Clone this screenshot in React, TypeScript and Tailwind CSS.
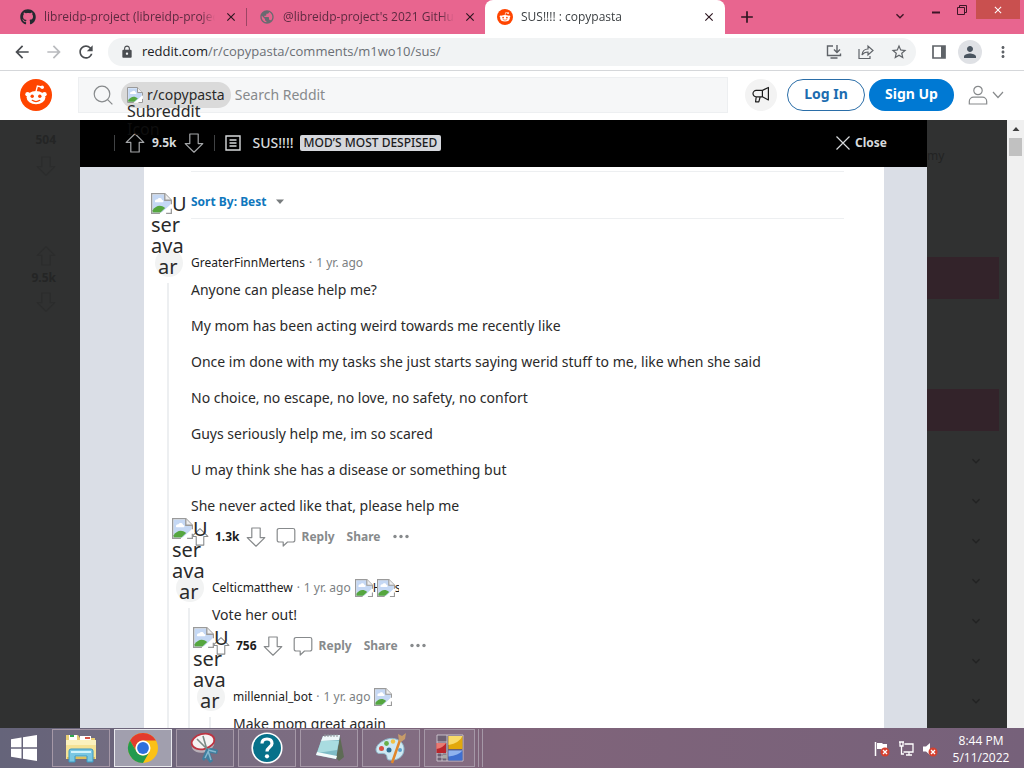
import React from 'react';
import { FaGithub } from 'react-icons/fa';
import {
  MdAdd, MdArrowBack, MdArrowForward, MdClose, MdExpandMore, MdLock, MdMoreVert,
  MdPerson, MdPublic, MdRefresh, MdStarBorder,
} from 'react-icons/md';

function Snoo({ className }: { className: string }) {
  return (
    <svg viewBox="0 0 32 32" className={className} aria-hidden="true">
      <circle cx="16" cy="16" r="16" fill="#ff4500" />
      <path d="M16 12.5 17.4 7l4.2 1" fill="none" stroke="#fff" strokeWidth="1.3" />
      <circle cx="22.2" cy="8.2" r="1.8" fill="#fff" />
      <circle cx="7.6" cy="15.2" r="2.3" fill="#fff" />
      <circle cx="24.4" cy="15.2" r="2.3" fill="#fff" />
      <ellipse cx="16" cy="18.6" rx="9.4" ry="6.6" fill="#fff" />
      <circle cx="12.2" cy="17.2" r="1.7" fill="#ff4500" />
      <circle cx="19.8" cy="17.2" r="1.7" fill="#ff4500" />
      <path d="M12.2 21.3q3.8 2.5 7.6 0" fill="none" stroke="#ff4500" strokeWidth="1.2" strokeLinecap="round" />
    </svg>
  );
}

function BrokenImage({ className }: { className: string }) {
  return (
    <svg viewBox="0 0 16 16" className={className} aria-hidden="true">
      <path d="M.5.5h10l5 5v10H.5z" fill="#fff" />
      <path d="M1.2 1.2h8.600l5 5v3.300l-5.600 5.300h-8z" fill="#c5d8f4" />
      <path d="M3 6.600c0-1.400 1-2 2-1.800.6-1.400 3.200-1.200 3.400.5 1.300 0 1.500 1.600.4 1.800H3.400z" fill="#fff" />
      <path d="M1.200 14.800v-1.700c2.600-3.500 6-4.700 9.600-1.600l-3.600 3.300z" fill="#55a63f" />
      <path d="m7.500 15.500 8-7.300v2.900l-4.700 4.400z" fill="#fff" />
      <path d="M15.500 8.600V5.500l-5-5H.5v15h6.3" fill="none" stroke="#9a9a9a" />
      <path d="M10.500.5v5h5" fill="#eee" stroke="#9a9a9a" />
      <path d="M11.500 15.500h4v-3.500" fill="none" stroke="#9a9a9a" />
    </svg>
  );
}

function VoteArrow({ down = false, className }: { down?: boolean; className: string }) {
  return (
    <svg viewBox="0 0 20 20" className={className} aria-hidden="true">
      <path
        d={down ? 'M10 19.2 1.2 10.6h4.6V1h8.4v9.6h4.6z' : 'M10 .8l8.8 8.6h-4.6V19H5.8V9.4H1.2z'}
        fill="none" stroke="currentColor" strokeWidth="1.2" strokeLinejoin="round"
      />
    </svg>
  );
}

function Tab({ title, icon, active = false }: { title: string; icon: React.ReactNode; active?: boolean }) {
  return (
    <div
      className={
        active
          ? 'flex w-60 items-center gap-2 rounded-t-lg bg-white pr-2 pl-3 text-[#3c4043]'
          : 'flex w-[238px] items-center gap-2 pr-[7px] pl-3 text-[#5d2a40]'
      }
    >
      {icon}
      <span className="min-w-0 flex-1 overflow-hidden text-xs whitespace-nowrap [mask-image:linear-gradient(to_right,black_92%,transparent)]">
        {title}
      </span>
      <button type="button" aria-label={`Close ${title}`} className="flex size-4 items-center justify-center">
        <MdClose className="size-3.5 text-[#2d1620]" />
      </button>
    </div>
  );
}

function BrowserChrome() {
  return (
    <header className="shrink-0 font-['Open_Sans','Noto_Sans',sans-serif]">
      <div className="flex h-[34px] bg-[#e8658f] pl-2">
        <Tab title="libreidp-project (libreidp-project)" icon={<FaGithub className="size-4 text-[#24292f]" />} />
        <div className="my-2 w-px bg-[#9c4564]" />
        <Tab title="@libreidp-project's 2021 GitHub profile" icon={<MdPublic className="size-4 text-[#6a6a70]" />} />
        <Tab active title="SUS!!!! : copypasta" icon={<Snoo className="size-4" />} />
        <button type="button" aria-label="New tab" className="ml-3 flex items-center">
          <MdAdd className="size-5 text-[#2d1620]" />
        </button>
        <div className="ml-auto flex items-start text-[#3c1626]">
          <button type="button" aria-label="Search tabs" className="mt-2 mr-4">
            <MdExpandMore className="size-4" />
          </button>
          <button type="button" aria-label="Minimize" className="flex h-5 w-6 items-center justify-center">
            <svg viewBox="0 0 10 10" className="size-2.5"><path d="M1 7.500h8" stroke="currentColor" strokeWidth="2" /></svg>
          </button>
          <button type="button" aria-label="Restore" className="flex h-5 w-7 items-center justify-center">
            <svg viewBox="0 0 10 10" className="size-2.5" fill="none" stroke="currentColor">
              <path d="M.5 2.500h7v7h-7zM2.500 2.500v-2h7v7h-2" />
            </svg>
          </button>
          <button type="button" aria-label="Close window" className="mr-1 flex h-[19px] w-11 items-center justify-center bg-[#c9504f] text-white">
            <MdClose className="size-3" />
          </button>
        </div>
      </div>
      <div className="flex h-[37px] items-center border-b border-[#d5d7da] bg-white px-3 text-[#5f6368]">
        <button type="button" aria-label="Back"><MdArrowBack className="size-5 text-[#4a4d51]" /></button>
        <button type="button" aria-label="Forward" className="ml-3"><MdArrowForward className="size-5 text-[#b9bbbe]" /></button>
        <button type="button" aria-label="Reload" className="ml-3"><MdRefresh className="size-5 text-[#4a4d51]" /></button>
        <div className="ml-3 flex h-7 flex-1 items-center rounded-full bg-[#f1f3f4] pr-2 pl-3">
          <MdLock className="size-3.5 text-[#4a4d51]" />
          <a href="#page" className="ml-2 text-[13px] text-[#6b6f74]">
            <span className="text-[#202124]">reddit.com</span>/r/copypasta/comments/m1wo10/sus/
          </a>
          <div className="ml-auto flex items-center gap-4">
            <button type="button" aria-label="Install Reddit">
              <svg viewBox="0 0 16 16" className="size-4" fill="none" stroke="currentColor" strokeWidth="1.4">
                <path d="M7 2H1.500v9.500h13V9.500M4.500 14h7M11 1v7M8 5.500l3 3 3-3" />
              </svg>
            </button>
            <button type="button" aria-label="Share page">
              <svg viewBox="0 0 16 16" className="size-4" fill="none" stroke="currentColor" strokeWidth="1.2">
                <path d="M1 5v9.500h11V12M4 11c.4-4 2.700-6 6-6V2l5 4.500-5 4.500V8c-2.700 0-4.500.8-6 3z" />
              </svg>
            </button>
            <button type="button" aria-label="Bookmark"><MdStarBorder className="size-[18px]" /></button>
          </div>
        </div>
        <button type="button" aria-label="Side panel" className="ml-4">
          <svg viewBox="0 0 14 14" className="size-3.5">
            <path d="M1 1h12v12H1z" fill="none" stroke="currentColor" strokeWidth="1.700" />
            <path d="M9 1h4v12H9z" fill="currentColor" />
          </svg>
        </button>
        <button type="button" aria-label="Profile" className="ml-3 flex size-6 items-center justify-center rounded-full bg-[#dfe1e5]">
          <MdPerson className="size-[18px] text-[#4a5560]" />
        </button>
        <button type="button" aria-label="Menu" className="ml-3"><MdMoreVert className="size-[18px]" /></button>
      </div>
    </header>
  );
}

function RedditHeader() {
  return (
    <div className="flex h-[49px] shrink-0 items-center bg-white px-5 pb-px">
      <a href="#home" aria-label="Reddit home"><Snoo className="size-8" /></a>
      <label className="relative z-10 ml-[26px] flex h-9 flex-1 items-center border border-[#edeff1] bg-[#f6f7f8]">
        <svg viewBox="0 0 20 20" className="ml-3.5 size-5 text-[#878a8c]" fill="none" stroke="currentColor" strokeWidth="1.2" aria-hidden="true">
          <circle cx="9" cy="9" r="7.800" /><path d="m14.600 14.600 4.800 4.800" />
        </svg>
        <span className="relative ml-2 flex h-[26px] items-center rounded-full bg-[#dadada] px-1.5 text-sm text-[#2a2a2a]">
          <BrokenImage className="mr-1 size-4" />
          r/copypasta
          <span className="absolute top-5 left-1.5 text-base leading-[18px]">
            Subreddit
            <span className="block text-[#0e0e0e]">Icon</span>
          </span>
        </span>
        <input
          type="search" aria-label="Search Reddit" placeholder="Search Reddit"
          className="min-w-0 flex-1 bg-transparent px-1 text-sm outline-none placeholder:text-[#878a8c]"
        />
      </label>
      <button type="button" aria-label="Advertise" className="ml-[17px] flex size-8 items-center justify-center rounded-full bg-[#f3f3f3]">
        <svg viewBox="0 0 18 18" className="size-[18px]" fill="none" stroke="#1c1c1c" strokeWidth="1.2" strokeLinejoin="round">
          <path d="M16.400 1.500v12.500l-6-3.200H4.200a3.200 3.200 0 0 1 0-6.400h6.200zM10.400 4.400v6.400M4.200 10.800l-.6 5h3.200l1.400-5" />
        </svg>
      </button>
      <a href="#login" className="ml-2.5 flex h-8 w-[78px] items-center justify-center rounded-full border border-[#2b6ea8] pb-0.5 text-sm font-bold text-[#1c6cb0]">Log In</a>
      <a href="#signup" className="ml-1 flex h-8 w-[85px] items-center justify-center rounded-full bg-[#0079d3] pb-0.5 text-sm font-bold text-white">Sign Up</a>
      <button type="button" aria-label="User menu" className="ml-3.5 flex items-center gap-1 text-[#878a8c]">
        <svg viewBox="0 0 20 20" className="size-5" fill="none" stroke="currentColor" strokeWidth="1.200">
          <circle cx="10" cy="5.500" r="4.200" /><path d="M1.300 19v-2.500c0-2.600 2-4.300 4.300-4.300h8.800c2.300 0 4.300 1.700 4.300 4.300V19z" />
        </svg>
        <svg viewBox="0 0 12 8" className="h-2 w-3" fill="none" stroke="currentColor" strokeWidth="1.200"><path d="m1 1 5 5.500L11 1" /></svg>
      </button>
    </div>
  );
}

function PostBar() {
  return (
    <div className="flex h-[47px] shrink-0 items-center bg-black pr-10 pb-0.5 pl-[34px] text-[#d7dadc]">
      <div className="mr-2.5 h-4 w-px bg-[#404244]" />
      <button type="button" aria-label="Upvote post" className="text-[#a4a6a8]"><VoteArrow className="size-5" /></button>
      <span className="mx-[7px] text-xs font-bold">9.5k</span>
      <button type="button" aria-label="Downvote post" className="text-[#a4a6a8]"><VoteArrow down className="size-5" /></button>
      <div className="mx-2.5 h-4 w-px bg-[#404244]" />
      <svg viewBox="0 0 16 16" className="size-4" fill="none" stroke="currentColor" strokeWidth="1.400" aria-hidden="true">
        <path d="M1 1h14v14H1zM4.500 5h7M4.500 8h7M4.500 11h7" />
      </svg>
      <h1 className="ml-3 text-sm font-medium">SUS!!!!</h1>
      <span className="ml-1.5 rounded-xs bg-[#d5d7dc] px-1 text-xs leading-4 font-medium text-[#1c1c1c]">MOD’S MOST DESPISED</span>
      <button type="button" className="ml-auto flex items-center gap-1 text-xs font-bold">
        <svg viewBox="0 0 16 16" className="size-4" stroke="currentColor" strokeWidth="1.200" aria-hidden="true"><path d="m1.500 1.500 13 13m0-13-13 13" /></svg>
        Close
      </button>
    </div>
  );
}

type CommentData = { user: string; depth: number; score: string; awards: string[]; lines: string[] };

const comments: CommentData[] = [
  {
    user: 'GreaterFinnMertens', depth: 0, score: '1.3k', awards: [],
    lines: [
      'Anyone can please help me?',
      'My mom has been acting weird towards me recently like',
      'Once im done with my tasks she just starts saying werid stuff to me, like when she said',
      'No choice, no escape, no love, no safety, no confort',
      'Guys seriously help me, im so scared',
      'U may think she has a disease or something but',
      'She never acted like that, please help me',
    ],
  },
  { user: 'Celticmatthew', depth: 1, score: '756', awards: ['H', 's'], lines: ['Vote her out!'] },
  { user: 'millennial_bot', depth: 2, score: '412', awards: [''], lines: ['Make mom great again'] },
];

function Comment({ user, depth, score, awards, lines }: CommentData) {
  return (
    <article className="flex">
      {Array.from({ length: depth }, (_, i) => (
        <div key={i} className="w-[21px] shrink-0 pl-3"><div className="h-full w-0.5 bg-[#edeff1]" /></div>
      ))}
      <div className="relative flex w-9 shrink-0 flex-col">
        <div className="size-7 shrink-0 rounded-full bg-[#f2f3f3]" />
        <div className="mt-1.5 ml-3 w-0.5 flex-1 bg-[#edeff1]" />
        <div className="absolute bottom-full -left-1 -mb-7 text-xl leading-[21px] text-[#2a2a2a]">
          <div className="flex"><BrokenImage className="size-[21px]" />U</div>
          <div>ser</div>
          <div>ava</div>
          <div className="pl-[7px]">ar</div>
        </div>
      </div>
      <div className="min-w-0 pb-[21px]">
        <div className="flex h-7 items-center text-xs text-[#7c7f82]">
          <a href="#user" className="text-[#1c1c1c]">{user}</a>
          <span className="mx-1">·</span>
          <span>1 yr. ago</span>
          <span className="ml-1 flex">
            {awards.map((alt, i) => (
              <span key={i} className="flex w-[22px] items-center overflow-hidden text-[#1c1c1c]">
                <BrokenImage className="size-[18px] shrink-0" />{alt}
              </span>
            ))}
          </span>
        </div>
        <div className="mt-0.5 flex flex-col gap-[15px] text-sm leading-[21px] text-[#2a2a2a]">
          {lines.map((line) => <p key={line}>{line}</p>)}
        </div>
        <div className="mt-[5px] flex h-8 items-center text-xs font-bold text-[#878a8c]">
          <button type="button" aria-label="Upvote"><VoteArrow className="size-[18px]" /></button>
          <span className="mx-1.5 text-[#1c1c1c]">{score}</span>
          <button type="button" aria-label="Downvote"><VoteArrow down className="size-5" /></button>
          <button type="button" className="ml-2.5 flex items-center gap-1.5">
            <svg viewBox="0 0 20 20" className="size-5" fill="none" stroke="currentColor" strokeWidth="1.200" strokeLinejoin="round" aria-hidden="true">
              <path d="M3 1.500h14A1.800 1.800 0 0 1 18.800 3.300v9.900A1.800 1.800 0 0 1 17 15h-5.500l-4.300 4v-4H3a1.800 1.800 0 0 1-1.800-1.800V3.300A1.800 1.800 0 0 1 3 1.500z" />
            </svg>
            Reply
          </button>
          <button type="button" className="ml-3">Share</button>
          <button type="button" aria-label="More" className="ml-2.5">
            <svg viewBox="0 0 20 6" className="h-1.5 w-5" fill="currentColor"><circle cx="4" cy="2.500" r="1.700" /><circle cx="10" cy="2.500" r="1.700" /><circle cx="16" cy="2.500" r="1.700" /></svg>
          </button>
        </div>
      </div>
    </article>
  );
}

function Page() {
  return (
    <main id="page" className="flex min-h-0 flex-1 overflow-hidden">
      <div className="flex w-20 shrink-0 flex-col items-end overflow-hidden bg-[#303131] pr-6 text-xs font-bold text-[#242525]">
        <span className="mt-3">504</span>
        <VoteArrow down className="mt-2 size-5 text-[#2b2c2c]" />
        <VoteArrow className="mt-[70px] size-5 text-[#2b2c2c]" />
        <span className="mt-1">9.5k</span>
        <VoteArrow down className="mt-1.5 size-5 text-[#2b2c2c]" />
      </div>
      <div className="flex min-w-0 flex-1 flex-col">
        <PostBar />
        <div className="flex min-h-0 flex-1 overflow-hidden bg-[#dadee6] pr-[43px] pl-16">
          <section className="min-w-0 flex-1 bg-white pl-[11px]">
            <div className="mr-10 ml-9 flex flex-col">
              <div className="mt-1 h-px bg-[#edeff1]" />
              <button type="button" className="mt-[17px] mb-[3px] flex h-[26px] items-center gap-2 text-xs font-bold text-[#0f77bd]">
                Sort By: Best
                <svg viewBox="0 0 10 6" className="h-1.5 w-2.5"><path d="M1 .5h8l-4 4.500z" fill="#787c7e" /></svg>
              </button>
              <div className="h-px bg-[#edeff1]" />
            </div>
            <div className="mt-[30px]">
              {comments.map((c) => <Comment key={c.user} {...c} />)}
            </div>
          </section>
        </div>
      </div>
      <div className="flex w-20 shrink-0 flex-col overflow-hidden bg-[#303131]">
        <span className="mt-7 text-xs text-[#222323]">my</span>
        <div className="mt-[93px] mr-2 h-[42px] shrink-0 bg-[#33232a]" />
        <div className="mt-[90px] mr-2 h-[42px] shrink-0 bg-[#33232a]" />
        <div className="mt-[22px] flex flex-col gap-6 pl-[41px]">
          {Array.from({ length: 7 }, (_, i) => <MdExpandMore key={i} className="size-4 text-[#222323]" />)}
        </div>
      </div>
      <div className="flex w-[17px] shrink-0 flex-col items-center bg-[#f0f0f0]">
        <svg viewBox="0 0 10 6" className="mt-1.5 h-1.5 w-2.5" aria-hidden="true"><path d="M1.500 5h7L5 1z" fill="#404040" /></svg>
        <div className="mt-1.5 h-[18px] w-[13px] bg-[#c1c1c1]" />
      </div>
    </main>
  );
}

function FolderIcon() {
  return (
    <svg viewBox="0 0 34 34" className="size-[34px]">
      <path d="M2 4h12l2 3h15v8H2z" fill="#e9cf76" />
      <path d="M5 4h8v5H5z" fill="#fff" /><path d="M6 4h4v2H6z" fill="#32a852" /><path d="M16 5h11v5H16z" fill="#fff" /><path d="M21 6h5v2h-5z" fill="#d65245" />
      <path d="M2 9h30v19H2z" fill="#f5e295" /><path d="M2 9h30v5H2z" fill="#fbf1bd" /><path d="M3 26h28v2H3z" fill="#dfbf5b" />
      <path d="M5 31V20q0-2 2-2h20q2 0 2 2v11h-6v-6H11v6z" fill="#79c7e3" stroke="#3c98c0" />
      <path d="M7 20h20v2H7z" fill="#d1f3fb" />
    </svg>
  );
}

function ChromeIcon() {
  return (
    <svg viewBox="0 0 32 32" className="size-8">
      <circle cx="16" cy="16" r="15" fill="#fbc116" />
      <path d="M3 8.500A15 15 0 0 1 29 8.500H16a7.500 7.500 0 0 0-6.500 11.250z" fill="#e33b2e" />
      <path d="M3 8.500A15 15 0 0 0 16 31l6.500-11.250a7.500 7.500 0 0 1-13 0z" fill="#229a4f" />
      <circle cx="16" cy="16" r="7.500" fill="#fff" /><circle cx="16" cy="16" r="5.900" fill="#2e6fdc" />
    </svg>
  );
}

function SnippingIcon() {
  return (
    <svg viewBox="0 0 32 32" className="size-8">
      <ellipse cx="14" cy="12.500" rx="11.500" ry="8" transform="rotate(-14 14 12.500)" fill="#b9b0b8" />
      <ellipse cx="14" cy="9.500" rx="11.500" ry="7.500" transform="rotate(-14 14 9.500)" fill="#f5f2f3" stroke="#bd3442" strokeWidth="1.800" />
      <path d="m8 7 11 11M14 4l4 14" stroke="#7b8a86" strokeWidth="1.600" />
      <path d="m17 17 5-1 7 2-1 4-7-1 3 8-3 2-4-5-2 3-2-2z" fill="#3f7f9f" />
      <path d="m19 18 8 2m-8-1 3 9m-3-8-3 6" stroke="#86b8cf" strokeWidth="1.500" />
    </svg>
  );
}

function HelpIcon() {
  return (
    <svg viewBox="0 0 32 32" className="size-8">
      <circle cx="16" cy="16" r="14.800" fill="#07718a" stroke="#fff" strokeWidth="1.600" />
      <path d="M11 11.500Q11 7 16 7t5 4.500c0 3.500-5 3.500-5 8" fill="none" stroke="#fff" strokeWidth="3.200" />
      <circle cx="16" cy="24.300" r="2.100" fill="#fff" />
    </svg>
  );
}

function NotepadIcon() {
  return (
    <svg viewBox="0 0 32 32" className="size-8">
      <path d="m27 4 4 21-5 4-3-3z" fill="#5e6b55" />
      <path d="m10 4 17-1-4 24-20-4z" fill="#7fbcc6" />
      <path d="m10 4 17-1-1 5-18 1z" fill="#eef8f9" />
      <path d="M8 9h18l-2 9-20 3z" fill="#a9dce0" />
      <path d="m3 23 20 4 1-3-20-4z" fill="#f4fbfb" />
      <path d="M12 2v3m3-3v3m3-3v3m3-3v3m3-3v3" stroke="#8b9194" />
    </svg>
  );
}

function PaintIcon() {
  return (
    <svg viewBox="0 0 32 32" className="size-8">
      <path d="M8 9c9-6 21-1 21 8 0 8-7 12-15 11-3 0-1-5-4-6-3-2-8 2-9-4 0-4 3-7 7-9z" fill="#cfe9f3" stroke="#8fb9cc" />
      <circle cx="6.500" cy="16.500" r="2.500" fill="#d94f43" /><circle cx="11.500" cy="11.500" r="2.400" fill="#68af48" /><circle cx="18" cy="9.500" r="2.200" fill="#f1c245" /><circle cx="14" cy="18" r="2.500" fill="#2f6d94" /><circle cx="25" cy="18" r="2" fill="#5a9fce" />
      <path d="m17 31 8-23" stroke="#e0862a" strokeWidth="2.500" /><path d="m24 9-1-7 4 2 4-3-1 6-4 3z" fill="#c79b69" />
    </svg>
  );
}

function BlocksIcon() {
  return (
    <svg viewBox="0 0 30 30" className="size-[30px]">
      <path d="M2 2h26v26H2zM2 9h10M2 20h10M12 2v26M7 20v8M2 24h10" fill="#6d6072" stroke="#d9d3da" strokeWidth=".8" />
      <path d="M13.500 3h14v13h-14z" fill="#e2a80c" /><path d="M13.500 3h14q-3 7-14 9z" fill="#f8da6a" />
      <path d="M1.500 10h9.500v10H1.500z" fill="#b9252b" /><path d="M1.500 10h9.500q-3 5-9.500 6z" fill="#e97a72" />
      <path d="M13.500 17.500h14v10h-14z" fill="#3f6fd0" /><path d="M13.500 17.500h14q-4 5-14 6z" fill="#8fb2ee" />
      <path d="M8 21.500h4v4H8z" fill="#a9aaa5" />
    </svg>
  );
}

const apps = [
  { name: 'File Explorer', icon: <FolderIcon /> },
  { name: 'Chrome', icon: <ChromeIcon /> },
  { name: 'Snipping Tool', icon: <SnippingIcon /> },
  { name: 'Help', icon: <HelpIcon /> },
  { name: 'Notepad', icon: <NotepadIcon /> },
  { name: 'Paint', icon: <PaintIcon /> },
  { name: 'Blocks', icon: <BlocksIcon /> },
];

function TrayError() {
  return <g><circle cx="11" cy="11" r="4.500" fill="#d5402f" /><path d="m9 9 4 4m0-4-4 4" stroke="#fff" strokeWidth="1.300" /></g>;
}

function Taskbar() {
  return (
    <footer className="flex h-10 shrink-0 items-stretch bg-linear-to-r from-[#65647a] via-[#80647a] to-[#76617a] font-['Open_Sans','Noto_Sans',sans-serif] text-white">
      <button type="button" aria-label="Start" className="flex w-[52px] items-center pl-[11px]">
        <svg viewBox="0 0 26 26" className="size-[26px]" fill="#fff"><path d="M0 4.200 10.500 2.500v9.800H0zM12 2.200 26 0v12.300H12zM0 13.700h10.500v9.800L0 21.800zM12 13.700h14V26l-14-2.200z" /></svg>
      </button>
      <nav aria-label="Applications" className="flex gap-1 py-px">
        {apps.map(({ name, icon }) => (
          <button
            key={name} type="button" aria-label={name}
            className={
              name === 'Chrome'
                ? 'flex w-[58px] items-center justify-center border border-[#e9e9ed] bg-[#a19fae]'
                : name === 'Blocks'
                  ? 'flex w-[51px] items-center justify-center border border-[#a598a7] bg-white/5'
                  : 'flex w-[58px] items-center justify-center border border-[#a598a7] bg-white/5'
            }
          >
            {icon}
          </button>
        ))}
      </nav>
      <div className="my-px w-1 border-r border-[#a598a7]" />
      <div className="my-px w-1 border-r border-[#a598a7]" />
      <div className="ml-auto flex items-center gap-2 pt-0.5">
        <svg viewBox="0 0 16 16" className="size-4" role="img" aria-label="Action Center"><path d="M1.500 1v14" stroke="#fff" strokeWidth="1.500" /><path d="M3 2h5l1 1h4v6H8L7 8H3z" fill="#fff" /><TrayError /></svg>
        <svg viewBox="0 0 16 16" className="size-4" fill="none" stroke="#fff" strokeWidth="1.300" role="img" aria-label="Network"><path d="M6.500 3H15v8H5.500M8 14h6M11 11v3M2 1v4h3V1M1 1h5M3.500 5v8H6" /></svg>
        <svg viewBox="0 0 16 16" className="size-4" role="img" aria-label="Volume"><path d="M1 5.500h3L8 2v12l-4-3.500H1z" fill="#fff" /><TrayError /></svg>
      </div>
      <div className="flex w-[86px] flex-col justify-center pt-0.5 text-center text-xs leading-[17px]">
        <span>8:44 PM</span>
        <span>5/11/2022</span>
      </div>
    </footer>
  );
}

export default function App() {
  return (
    <div className="flex h-screen flex-col overflow-hidden bg-white font-['Noto_Sans',sans-serif]">
      <BrowserChrome />
      <RedditHeader />
      <Page />
      <Taskbar />
    </div>
  );
}
